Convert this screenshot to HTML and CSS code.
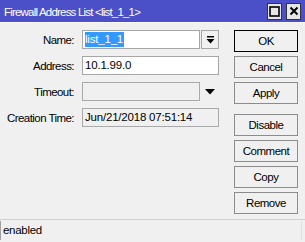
FILE: index.html
```html
<!DOCTYPE html>
<html lang="en">
<head>
    <meta charset="UTF-8">
    <title>Firewall Address List</title>
    <link rel="stylesheet" href="styles.css">
</head>
<body>
    <div class="window">
        <div class="titlebar">
            <span class="title">Firewall Address List &lt;list_1_1&gt;</span>
            <div class="title-buttons">
                <span class="tbtn">
                    <svg width="11" height="11" viewBox="0 0 11 11"><rect x="1" y="1" width="9" height="9" fill="none" stroke="#000" stroke-width="1.6"/></svg>
                </span>
                <span class="tbtn">
                    <svg width="10" height="10" viewBox="0 0 10 10"><path d="M1.5 1.5 L8.5 8.5 M8.5 1.5 L1.5 8.5" stroke="#000" stroke-width="2"/></svg>
                </span>
            </div>
        </div>

        <div class="content">
            <div class="form">
                <div class="row">
                    <label>Name:</label>
                    <div class="field short"><span class="sel">list_1_1</span></div>
                    <span class="dropbtn">
                        <svg width="9" height="8" viewBox="0 0 9 8"><rect x="1" y="0" width="7" height="1.5" fill="#000"/><path d="M0.5 3 L8.5 3 L4.5 7.5 Z" fill="#000"/></svg>
                    </span>
                </div>
                <div class="row">
                    <label>Address:</label>
                    <div class="field">10.1.99.0</div>
                </div>
                <div class="row">
                    <label>Timeout:</label>
                    <div class="field short readonly"></div>
                    <span class="droparrow">
                        <svg width="10" height="6" viewBox="0 0 10 6"><path d="M0 0 L10 0 L5 5.5 Z" fill="#000"/></svg>
                    </span>
                </div>
                <div class="row">
                    <label>Creation Time:</label>
                    <div class="field readonly">Jun/21/2018 07:51:14</div>
                </div>
            </div>

            <div class="buttons">
                <button class="default">OK</button>
                <button>Cancel</button>
                <button>Apply</button>
                <button class="sep">Disable</button>
                <button>Comment</button>
                <button>Copy</button>
                <button>Remove</button>
            </div>
        </div>

        <div class="statusbar">
            <div class="status">enabled</div>
        </div>
    </div>
</body>
</html>
```

FILE: styles.css
```css
body {
    margin: 0;
    background-color: #f0f0f0;
    font-family: "Liberation Sans", Arial, sans-serif;
    font-size: 11px;
    color: #000;
}
.window {
    width: 305px;
    height: 242px;
    display: flex;
    flex-direction: column;
    overflow: hidden;
}
.titlebar {
    height: 22px;
    background-color: #4b50c8;
    display: flex;
    align-items: center;
    justify-content: space-between;
    padding: 0 4px 0 4px;
    box-sizing: border-box;
}
.title {
    color: #fff;
    font-size: 11.5px;
    letter-spacing: -0.8px;
    margin-top: 1px;
}
.title-buttons {
    display: flex;
    gap: 4px;
}
.tbtn {
    width: 13px;
    height: 15px;
    background-color: #e6e6e6;
    border: 1px solid #333;
    display: flex;
    align-items: center;
    justify-content: center;
}
.content {
    display: flex;
    padding-top: 7px;
    height: 197px;
    border-top: 1px solid #fafafa;
    box-sizing: border-box;
}
.form {
    width: 234px;
    display: flex;
    flex-direction: column;
    gap: 7px;
}
.row {
    display: flex;
    align-items: center;
    height: 19px;
}
.row label {
    width: 74px;
    text-align: right;
    margin-right: 8px;
    font-size: 11.5px;
    letter-spacing: -0.55px;
}
.field {
    width: 137px;
    height: 19px;
    box-sizing: border-box;
    border: 1px solid #a6a6a6;
    background-color: #fff;
    padding: 0 2px;
    line-height: 17px;
    font-size: 11.5px;
    letter-spacing: -0.2px;
}
.field.short {
    width: 118px;
}
.field.readonly {
    background-color: #f0f0f0;
    border-color: #a9a9a9;
}
.sel {
    background-color: #3399ff;
    color: #fff;
    display: inline-block;
    line-height: 15px;
    padding-right: 1px;
}
.dropbtn {
    width: 18px;
    height: 19px;
    box-sizing: border-box;
    border: 1px solid #a6a6a6;
    margin-left: 1px;
    display: flex;
    align-items: center;
    justify-content: center;
}
.droparrow {
    margin-left: 5px;
    display: flex;
    align-items: center;
    margin-top: 1px;
}
.buttons {
    display: flex;
    flex-direction: column;
    gap: 4px;
}
button {
    width: 64px;
    height: 22px;
    box-sizing: border-box;
    background-color: #f0f0f0;
    border: 1px solid #8c8c8c;
    font-family: "Liberation Sans", Arial, sans-serif;
    font-size: 11.5px;
    letter-spacing: -0.5px;
    color: #000;
    padding: 0;
}
button.default {
    border: 1px solid #000;
}
button.sep {
    margin-top: 6px;
}
.statusbar {
    border-top: 1px solid #d0d0d0;
    padding: 1px 3px 2px 0;
    flex: 1;
}
.status {
    height: 19px;
    border-left: 1px solid #a0a0a0;
    border-right: 1px solid #e0e0e0;
    padding-left: 2px;
    line-height: 19px;
    font-size: 11.5px;
    letter-spacing: -0.3px;
}
```
